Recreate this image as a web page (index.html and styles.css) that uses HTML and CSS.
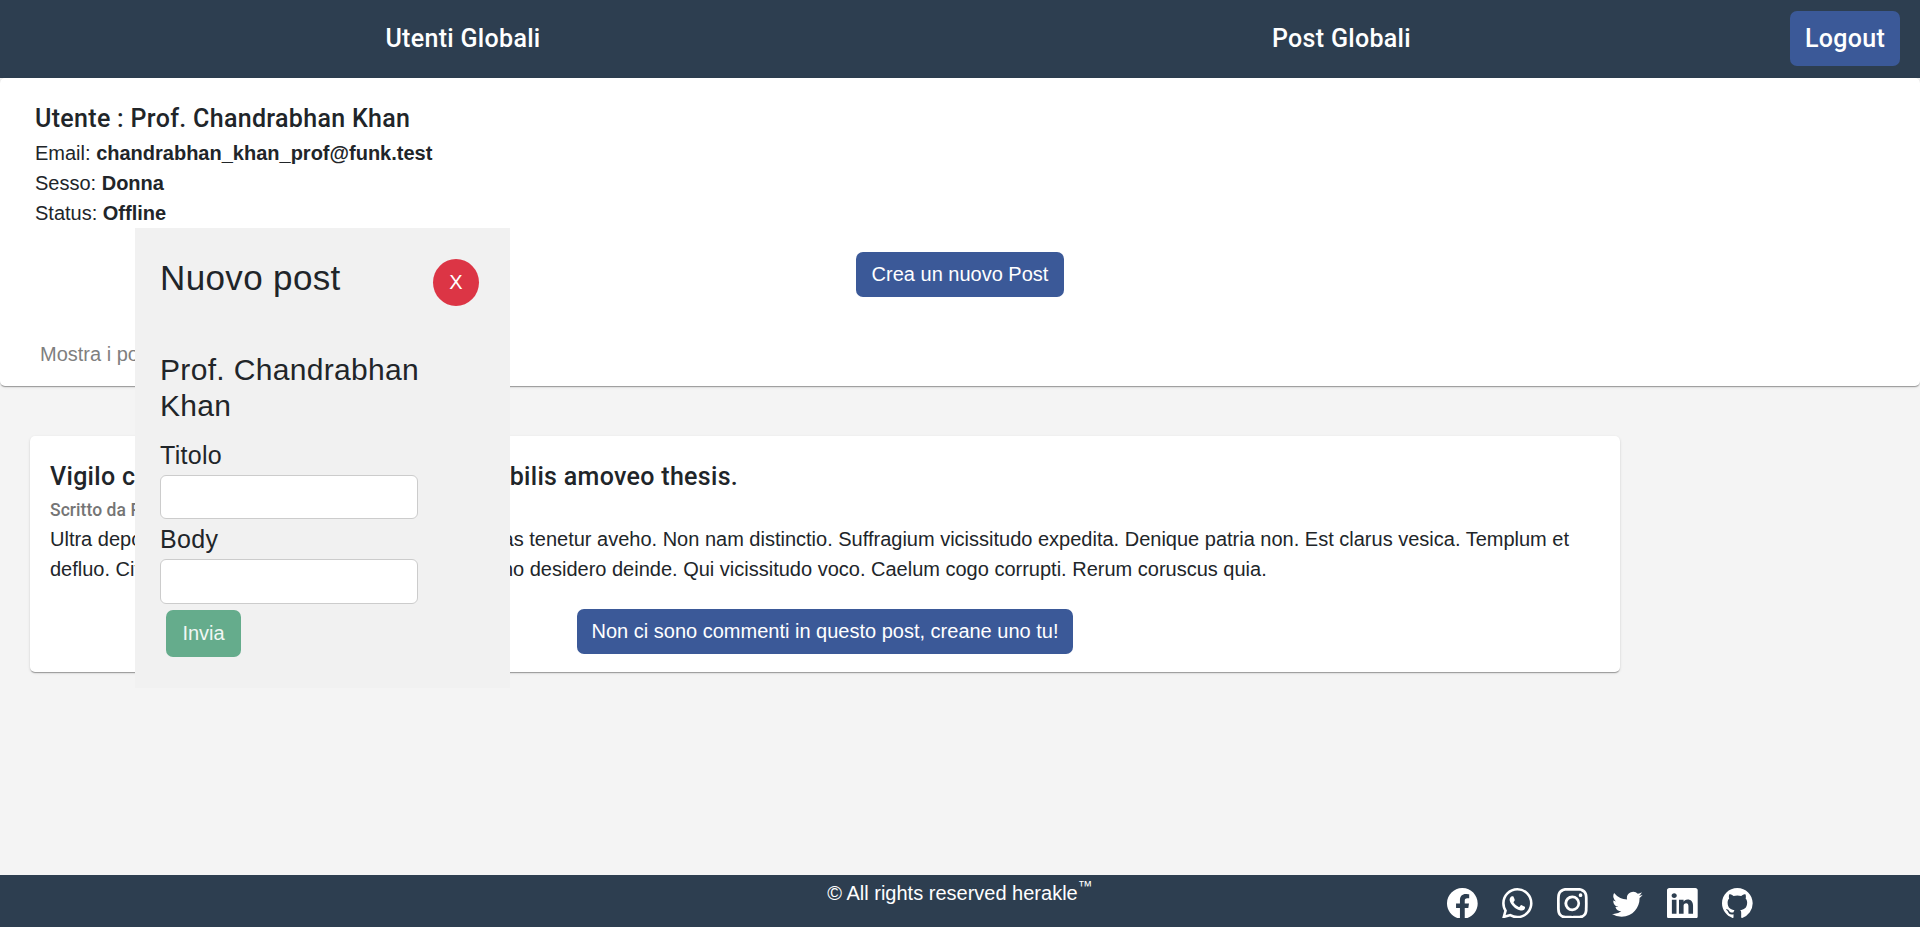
FILE: index.html
```html
<!DOCTYPE html>
<html lang="it">
<head>
<meta charset="utf-8">
<title>Herakle</title>
<link rel="stylesheet" href="styles.css">
</head>
<body>
<header class="navbar">
  <nav class="nav-links">
    <a class="nav-link">Utenti Globali</a>
    <a class="nav-link">Post Globali</a>
  </nav>
  <button class="btn btn-logout">Logout</button>
</header>

<main class="content">
  <section class="card user-card">
    <h1 class="card-title">Utente : Prof. Chandrabhan Khan</h1>
    <p class="line">Email: <b>chandrabhan_khan_prof@funk.test</b></p>
    <p class="line">Sesso: <b>Donna</b></p>
    <p class="line">Status: <b>Offline</b></p>
    <div class="center create-row"><button class="btn">Crea un nuovo Post</button></div>
    <p class="line toggle">Mostra i post</p>
  </section>

  <article class="card post-card">
    <h2 class="card-title">Vigilo c<span class="title-mid">ruentus territo cumque vulnero mira</span>bilis amoveo thesis.</h2>
    <p class="subtitle">Scritto da Prof. Chandrabhan Khan</p>
    <p class="line">Ultra depo<span class="first-mid">pulo spiritus vorago. Asper comis crin</span>as tenetur aveho. Non nam distinctio. Suffragium vicissitudo expedita. Denique patria non. Est clarus vesica. Templum et<br>defluo. Ci<span class="second-mid">to vinitor. Tabella virtus subito huma</span>no desidero deinde. Qui vicissitudo voco. Caelum cogo corrupti. Rerum coruscus quia.</p>
    <div class="center comment-row"><button class="btn">Non ci sono commenti in questo post, creane uno tu!</button></div>
  </article>
</main>

<div class="dialog">
  <div class="dialog-head">
    <h3 class="dialog-title">Nuovo post</h3>
    <button class="btn-close">X</button>
  </div>
  <form class="dialog-form">
    <h4 class="dialog-user">Prof. Chandrabhan<br>Khan</h4>
    <label class="label" for="titolo">Titolo</label>
    <input class="input" id="titolo" type="text">
    <label class="label" for="body">Body</label>
    <input class="input" id="body" type="text">
    <button class="btn-send" type="button">Invia</button>
  </form>
</div>

<footer class="footer">
  <p class="copyright">© All rights reserved herakle<sup class="tm">™</sup></p>
  <div class="socials">
    <svg class="icon" viewBox="0 0 16 16"><path d="M16 8.049c0-4.446-3.582-8.05-8-8.05C3.58 0-.002 3.603-.002 8.05c0 4.017 2.926 7.347 6.75 7.951v-5.625h-2.03V8.05H6.75V6.275c0-2.017 1.195-3.131 3.022-3.131.876 0 1.791.157 1.791.157v1.98h-1.009c-.993 0-1.303.621-1.303 1.258v1.51h2.218l-.354 2.326H9.25V16c3.824-.604 6.75-3.934 6.75-7.951z"/></svg>
    <svg class="icon" viewBox="0 0 16 16"><path d="M13.601 2.326A7.854 7.854 0 0 0 7.994 0C3.627 0 .068 3.558.064 7.926c0 1.399.366 2.76 1.057 3.965L0 16l4.204-1.102a7.933 7.933 0 0 0 3.79.965h.004c4.368 0 7.926-3.558 7.93-7.93A7.898 7.898 0 0 0 13.6 2.326zM7.994 14.521a6.573 6.573 0 0 1-3.356-.92l-.24-.144-2.494.654.666-2.433-.156-.251a6.56 6.56 0 0 1-1.007-3.505c0-3.626 2.957-6.584 6.591-6.584a6.56 6.56 0 0 1 4.66 1.931 6.557 6.557 0 0 1 1.928 4.66c-.004 3.639-2.961 6.592-6.592 6.592zm3.615-4.934c-.197-.099-1.17-.578-1.353-.646-.182-.065-.315-.099-.445.099-.133.197-.513.646-.627.775-.114.133-.232.148-.43.05-.197-.1-.836-.308-1.592-.985-.59-.525-.985-1.175-1.103-1.372-.114-.198-.011-.304.088-.403.087-.088.197-.232.296-.346.1-.114.133-.198.198-.33.065-.134.034-.248-.015-.347-.05-.099-.445-1.076-.612-1.47-.16-.389-.323-.335-.445-.34-.114-.007-.247-.007-.38-.007a.729.729 0 0 0-.529.247c-.182.198-.691.677-.691 1.654 0 .977.71 1.916.81 2.049.098.133 1.394 2.132 3.383 2.992.47.205.84.326 1.129.418.475.152.904.129 1.246.08.38-.058 1.171-.48 1.338-.943.164-.464.164-.86.114-.943-.049-.084-.182-.133-.38-.232z"/></svg>
    <svg class="icon" viewBox="0 0 16 16"><path d="M8 0C5.829 0 5.556.01 4.703.048 3.85.088 3.269.222 2.76.42a3.917 3.917 0 0 0-1.417.923A3.927 3.927 0 0 0 .42 2.76C.222 3.268.087 3.85.048 4.7.01 5.555 0 5.827 0 8.001c0 2.172.01 2.444.048 3.297.04.852.174 1.433.372 1.942.205.526.478.972.923 1.417.444.445.89.719 1.416.923.51.198 1.09.333 1.942.372C5.555 15.99 5.827 16 8 16s2.444-.01 3.298-.048c.851-.04 1.434-.174 1.943-.372a3.916 3.916 0 0 0 1.416-.923c.445-.445.718-.891.923-1.417.197-.509.332-1.09.372-1.942C15.99 10.445 16 10.173 16 8s-.01-2.445-.048-3.299c-.04-.851-.175-1.433-.372-1.941a3.926 3.926 0 0 0-.923-1.417A3.911 3.911 0 0 0 13.24.42c-.51-.198-1.092-.333-1.943-.372C10.443.01 10.172 0 7.998 0h.003zm-.717 1.442h.718c2.136 0 2.389.007 3.232.046.78.035 1.204.166 1.486.275.373.145.64.319.92.599.28.28.453.546.598.92.11.281.24.705.275 1.485.039.843.047 1.096.047 3.231s-.008 2.389-.047 3.232c-.035.78-.166 1.203-.275 1.485a2.47 2.47 0 0 1-.599.919c-.28.28-.546.453-.92.598-.28.11-.704.24-1.485.276-.843.038-1.096.047-3.232.047s-2.39-.009-3.233-.047c-.78-.036-1.203-.166-1.485-.276a2.478 2.478 0 0 1-.92-.598 2.48 2.48 0 0 1-.6-.92c-.109-.281-.24-.705-.275-1.485-.038-.843-.046-1.096-.046-3.233 0-2.136.008-2.388.046-3.231.036-.78.166-1.204.276-1.486.145-.373.319-.64.599-.92.28-.28.546-.453.92-.598.282-.11.705-.24 1.485-.276.738-.034 1.024-.044 2.515-.045v.002zm4.988 1.328a.96.96 0 1 0 0 1.92.96.96 0 0 0 0-1.92zm-4.27 1.122a4.109 4.109 0 1 0 0 8.217 4.109 4.109 0 0 0 0-8.217zm0 1.441a2.667 2.667 0 1 1 0 5.334 2.667 2.667 0 0 1 0-5.334z"/></svg>
    <svg class="icon" viewBox="0 0 16 16"><path d="M5.026 15c6.038 0 9.341-5.003 9.341-9.334 0-.14 0-.282-.006-.422A6.685 6.685 0 0 0 16 3.542a6.658 6.658 0 0 1-1.889.518 3.301 3.301 0 0 0 1.447-1.817 6.533 6.533 0 0 1-2.087.793A3.286 3.286 0 0 0 7.875 6.03a9.325 9.325 0 0 1-6.767-3.429 3.289 3.289 0 0 0 1.018 4.382A3.323 3.323 0 0 1 .64 6.575v.045a3.288 3.288 0 0 0 2.632 3.218 3.203 3.203 0 0 1-.865.115 3.23 3.23 0 0 1-.614-.057 3.283 3.283 0 0 0 3.067 2.277A6.588 6.588 0 0 1 .78 13.58a6.32 6.32 0 0 1-.78-.045A9.344 9.344 0 0 0 5.026 15z"/></svg>
    <svg class="icon" viewBox="0 0 16 16"><path d="M0 1.146C0 .513.526 0 1.175 0h13.65C15.474 0 16 .513 16 1.146v13.708c0 .633-.526 1.146-1.175 1.146H1.175C.526 16 0 15.487 0 14.854V1.146zm4.943 12.248V6.169H2.542v7.225h2.401zm-1.2-8.212c.837 0 1.358-.554 1.358-1.248-.015-.709-.52-1.248-1.342-1.248-.822 0-1.359.54-1.359 1.248 0 .694.521 1.248 1.327 1.248h.016zm4.908 8.212V9.359c0-.216.016-.432.08-.586.173-.431.568-.878 1.232-.878.869 0 1.216.662 1.216 1.634v3.865h2.401V9.25c0-2.22-1.184-3.252-2.764-3.252-1.274 0-1.845.7-2.165 1.193v.025h-.016a5.54 5.54 0 0 1 .016-.025V6.169h-2.4c.03.678 0 7.225 0 7.225h2.4z"/></svg>
    <svg class="icon" viewBox="0 0 16 16"><path d="M8 0C3.58 0 0 3.58 0 8c0 3.54 2.29 6.53 5.47 7.59.4.07.55-.17.55-.38 0-.19-.01-.82-.01-1.49-2.01.37-2.53-.49-2.69-.94-.09-.23-.48-.94-.82-1.13-.28-.15-.68-.52-.01-.53.63-.01 1.08.58 1.23.82.72 1.21 1.87.87 2.33.66.07-.52.28-.87.51-1.07-1.78-.2-3.64-.89-3.64-3.95 0-.87.31-1.59.82-2.15-.08-.2-.36-1.02.08-2.12 0 0 .67-.21 2.2.82.64-.18 1.32-.27 2-.27.68 0 1.36.09 2 .27 1.53-1.04 2.2-.82 2.2-.82.44 1.1.16 1.92.08 2.12.51.56.82 1.27.82 2.15 0 3.07-1.87 3.75-3.65 3.95.29.25.54.73.54 1.48 0 1.07-.01 1.93-.01 2.2 0 .21.15.46.55.38A8.012 8.012 0 0 0 16 8c0-4.42-3.58-8-8-8z"/></svg>
  </div>
</footer>
</body>
</html>
```
FILE: styles.css
```css
* { box-sizing: border-box; }

body {
  margin: 0;
  min-height: 927px;
  display: flex;
  flex-direction: column;
  background: #f4f4f4;
  color: #212529;
  font: 20px/30px "Liberation Sans", Arial, sans-serif;
}

h1, h2, h3, h4, p { margin: 0; }

button { border: 0; font: inherit; }

.navbar {
  height: 78px;
  padding: 0 20px 1px 0;
  display: flex;
  align-items: center;
  background: #2d3e50;
}

.nav-links {
  flex: 1;
  display: grid;
  grid-template-columns: 926px 831px;
}

.nav-link, .btn-logout {
  color: #fff;
  font: 500 25px/30px Roboto, sans-serif;
  letter-spacing: .3125px;
  text-align: center;
}

.btn {
  height: 45px;
  padding: 0 15px 2px;
  border-radius: 7px;
  background: #3b5998;
  color: #fff;
}

.navbar .btn-logout {
  width: 110px;
  height: 55px;
  padding: 0;
}

.content { flex: 1; }

.card {
  background: #fff;
  border-radius: 5px;
  box-shadow: 0 2px 1px -1px rgba(0,0,0,.2), 0 1px 1px rgba(0,0,0,.14), 0 1px 3px rgba(0,0,0,.12);
}

.user-card { height: 308px; padding: 21px 35px; }

.post-card {
  width: 1590px;
  height: 236px;
  margin: 50px 0 0 30px;
  padding: 21px 20px;
}

.card-title {
  font: 500 25px/40px Roboto, sans-serif;
  letter-spacing: .3125px;
  white-space: nowrap;
}

.user-card .card-title { margin-bottom: -1px; }

.title-mid { letter-spacing: -.76px; }
.first-mid { letter-spacing: .763px; }
.second-mid { letter-spacing: 1.34px; }

.subtitle {
  color: #757575;
  font: 500 17.5px/27px Roboto, sans-serif;
  letter-spacing: .06px;
}

.line { white-space: nowrap; }

.center { display: flex; justify-content: center; }

.create-row { margin-top: 24px; }

.create-row .btn { width: 208px; }

.toggle { margin: 42px 0 0 5px; color: #7f7f7f; }

.comment-row { margin-top: 25px; }

.dialog {
  position: absolute;
  left: 135px;
  top: 228px;
  width: 375px;
  height: 460px;
  padding: 29px 31px 0 25px;
  background: #f1f1f1;
}

.dialog-head {
  display: flex;
  justify-content: space-between;
  align-items: flex-start;
}

.dialog-title { font-weight: 400; font-size: 35px; line-height: 42px; letter-spacing: .36px; }

.btn-close {
  width: 46px;
  height: 47px;
  margin-top: 2px;
  padding: 0 0 1px;
  border-radius: 50%;
  background: #dc3545;
  color: #fff;
}

.dialog-form {
  width: 258px;
  margin-top: 46px;
  display: flex;
  flex-direction: column;
}

.dialog-user {
  margin-bottom: 12px;
  font-weight: 400;
  font-size: 30px;
  line-height: 36px;
  letter-spacing: .33px;
  white-space: nowrap;
}

.label { font-size: 25px; line-height: 38px; letter-spacing: .3px; }

.input {
  width: 258px;
  height: 44px;
  margin: 1px 0;
  border: 1px solid #ccc;
  border-radius: 6px;
  background: #fff;
}

#body { height: 45px; }

.btn-send {
  width: 75px;
  height: 47px;
  margin: 5px 0 0 6px;
  padding: 0 0 2px;
  border-radius: 7px;
  background: #65ac8c;
  color: #f1f7f4;
}

.footer {
  height: 52px;
  position: relative;
  display: flex;
  justify-content: center;
  background: #2d3e50;
  color: #fff;
}

.copyright { line-height: 36px; }

.tm { font-size: 15px; line-height: 0; vertical-align: 9px; }

.socials {
  position: absolute;
  top: 12.5px;
  right: 167px;
  display: flex;
  gap: 24.3px;
}

.icon { width: 30.7px; height: 30.7px; fill: #fff; }
```
